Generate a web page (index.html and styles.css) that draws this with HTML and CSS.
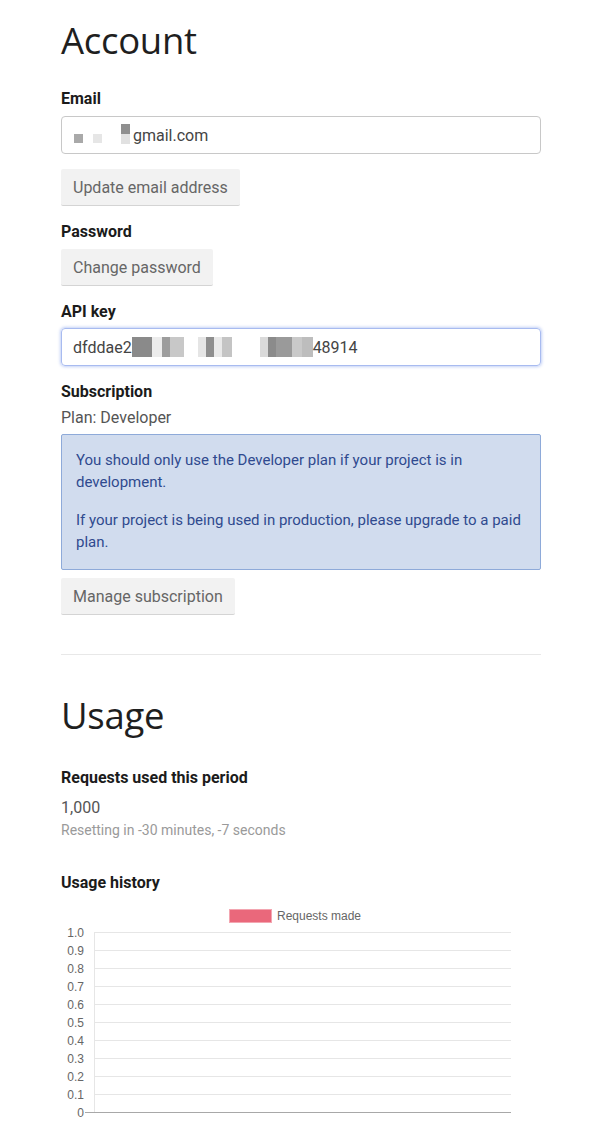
FILE: index.html
```html
<!DOCTYPE html>
<html>
<head>
<meta charset="utf-8">
<link rel="stylesheet" href="styles.css">
</head>
<body>
<main class="page">
  <h1 class="title">Account</h1>

  <section class="field">
    <h3 class="label">Email</h3>
    <div class="input"><span class="blur blur-email"><i class="px p1"></i><i class="px p2"></i><i class="px p3"></i><i class="px p4"></i></span>gmail.com</div>
    <button class="btn">Update email address</button>
  </section>

  <section class="field">
    <h3 class="label">Password</h3>
    <button class="btn">Change password</button>
  </section>

  <section class="field">
    <h3 class="label">API key</h3>
    <div class="input focused">dfddae2<span class="blur blur-key"></span>48914</div>
  </section>

  <section class="field">
    <h3 class="label">Subscription</h3>
    <p class="plan">Plan: Developer</p>
    <div class="alert">
      <p>You should only use the Developer plan if your project is in development.</p>
      <p>If your project is being used in production, please upgrade to a paid plan.</p>
    </div>
    <button class="btn">Manage subscription</button>
  </section>

  <hr class="divider">

  <h1 class="title title-usage">Usage</h1>

  <section class="field">
    <h3 class="label">Requests used this period</h3>
    <p class="count">1,000</p>
    <p class="muted">Resetting in -30 minutes, -7 seconds</p>
  </section>

  <section class="field history">
    <h3 class="label">Usage history</h3>
    <svg class="chart" width="480" height="228" viewBox="0 0 480 228">
      <rect x="168.5" y="9.5" width="42" height="13" fill="#ea687b" stroke="#f3a6b1" stroke-width="1"/>
      <text x="216" y="20" class="legend">Requests made</text>
      <g class="grid">
        <line x1="33" y1="32.5" x2="450" y2="32.5"/>
        <line x1="33" y1="50.5" x2="450" y2="50.5"/>
        <line x1="33" y1="68.5" x2="450" y2="68.5"/>
        <line x1="33" y1="86.5" x2="450" y2="86.5"/>
        <line x1="33" y1="104.5" x2="450" y2="104.5"/>
        <line x1="33" y1="122.5" x2="450" y2="122.5"/>
        <line x1="33" y1="140.5" x2="450" y2="140.5"/>
        <line x1="33" y1="158.5" x2="450" y2="158.5"/>
        <line x1="33" y1="176.5" x2="450" y2="176.5"/>
        <line x1="33" y1="194.5" x2="450" y2="194.5"/>
        <line x1="33.5" y1="32" x2="33.5" y2="212"/>
      </g>
      <line x1="24" y1="212.5" x2="450" y2="212.5" class="axis"/>
      <g class="ticks" text-anchor="end">
        <text x="23" y="36.5">1.0</text>
        <text x="23" y="54.5">0.9</text>
        <text x="23" y="72.5">0.8</text>
        <text x="23" y="90.5">0.7</text>
        <text x="23" y="108.5">0.6</text>
        <text x="23" y="126.5">0.5</text>
        <text x="23" y="144.5">0.4</text>
        <text x="23" y="162.5">0.3</text>
        <text x="23" y="180.5">0.2</text>
        <text x="23" y="198.5">0.1</text>
        <text x="23" y="216.5">0</text>
      </g>
    </svg>
  </section>
</main>
</body>
</html>
```

FILE: styles.css
```css
* { box-sizing: border-box; }

html, body {
  margin: 0;
  padding: 0;
  background: #fff;
}

body {
  font-family: Roboto, "Liberation Sans", sans-serif;
  color: #222;
}

.page {
  width: 480px;
  margin-left: 61px;
  padding-top: 16px;
  display: flex;
  flex-direction: column;
}

.title {
  margin: 0;
  font-family: "Open Sans", sans-serif;
  font-weight: 400;
  font-size: 36.5px;
  line-height: 48px;
  color: #1f1f1f;
  letter-spacing: -0.3px;
}

.field {
  display: flex;
  flex-direction: column;
  align-items: flex-start;
}

.label {
  margin: 0;
  font-size: 16px;
  font-weight: 700;
  line-height: 20px;
  color: #1b1b1b;
}

.page > .title + .field { margin-top: 25px; }
.field + .field { margin-top: 16px; }

.label + .input,
.label + .btn { margin-top: 7px; }

.input {
  width: 100%;
  height: 38px;
  border: 1px solid #c8c8c8;
  border-radius: 4px;
  padding: 0 11px;
  display: flex;
  align-items: center;
  font-size: 16px;
  color: #444;
}

.label + .input.focused {
  margin-top: 6px;
  border-color: #a8bbf0;
  box-shadow: 0 0 3px 1px rgba(120, 150, 235, 0.45);
}

.input + .btn { margin-top: 15px; }

.blur { display: inline-flex; height: 18px; }
.blur-email { width: 60px; position: relative; }
.px { position: absolute; display: block; }
.p1 { left: 1px; top: 8px; width: 9px; height: 9px; background: #a9a9a9; }
.p2 { left: 20px; top: 8px; width: 9px; height: 9px; background: #e6e6e6; }
.p3 { left: 48px; top: -2px; width: 9px; height: 10px; background: #8f8f8f; }
.p4 { left: 48px; top: 8px; width: 9px; height: 10px; background: #e1e1e1; }

.blur-key {
  width: 181px;
  height: 20px;
  background:
    linear-gradient(90deg,
      #8a8a8a 0 12px, #8a8a8a 12px 20px, #ececec 20px 30px, #9d9d9d 30px 38px,
      #c8c8c8 38px 52px, #fff 52px 66px, #e5e5e5 66px 74px, #8e8e8e 74px 82px,
      #e9e9e9 82px 90px, #c4c4c4 90px 100px, #fff 100px 128px, #dadada 128px 136px,
      #8b8b8b 136px 144px, #9a9a9a 144px 160px, #c9c9c9 160px 170px, #bdbdbd 170px 181px);
}

.btn {
  font-family: Roboto, "Liberation Sans", sans-serif;
  font-size: 16px;
  color: #666;
  background: #f2f2f2;
  border: none;
  border-bottom: 1px solid #d4d4d4;
  border-radius: 2px;
  height: 37px;
  padding: 0 12px;
  cursor: pointer;
}

.plan {
  margin: 6px 0 0;
  font-size: 16px;
  line-height: 20px;
  color: #555;
}

.alert {
  width: 100%;
  margin-top: 6px;
  background: #d1dcee;
  border: 1px solid #8eaad9;
  border-radius: 2px;
  padding: 14px 14px 16px;
  color: #2f4a8f;
  font-size: 15px;
  line-height: 22px;
}

.alert p { margin: 0; }
.alert p + p { margin-top: 16px; }

.alert + .btn { margin-top: 8px; }

.divider {
  width: 100%;
  margin: 39px 0 0;
  border: none;
  border-top: 1px solid #e8e8e8;
}

.title-usage { margin-top: 36px; }

.page > .title-usage + .field { margin-top: 29px; }

.count {
  margin: 10px 0 0;
  font-size: 16px;
  line-height: 20px;
  color: #555;
}

.muted {
  margin: 3px 0 0;
  font-size: 14px;
  line-height: 18px;
  color: #9a9a9a;
}

.field.history { margin-top: 34px; }

.chart {
  display: block;
  margin-top: 7px;
}

.legend {
  font-family: "Liberation Sans", Arial, sans-serif;
  font-size: 12px;
  fill: #666;
}

.grid line {
  stroke: #e6e6e6;
  stroke-width: 1;
}

.axis {
  stroke: #a8a8a8;
  stroke-width: 1;
}

.ticks text {
  font-family: "Liberation Sans", Arial, sans-serif;
  font-size: 12px;
  fill: #666;
}
```
